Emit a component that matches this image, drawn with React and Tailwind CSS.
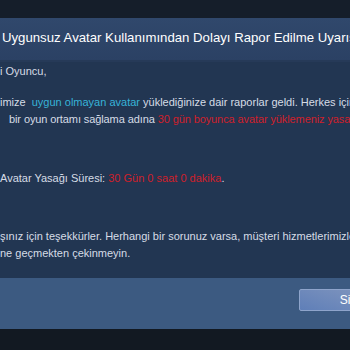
export default function App() {
  const font = { fontFamily: '"Liberation Sans", Arial, sans-serif' };
  return (
    <div
      className="w-[350px] h-[350px] overflow-hidden flex flex-col bg-[#121922]"
      style={font}
    >
      {/* üst karanlık şerit */}
      <div className="h-[18px] shrink-0 bg-[#151e2a]" />

      {/* başlık */}
      <div className="h-[44px] shrink-0 flex items-center pl-[2px] pb-[2px] bg-gradient-to-b from-[#30486c] to-[#2b4164] border-b-2 border-[#263a58] whitespace-nowrap overflow-hidden">
        <span className="text-[13.2px] text-white">
          Uygunsuz Avatar Kullanımından Dolayı Rapor Edilme Uyarısı
        </span>
      </div>

      {/* içerik */}
      <div className="h-[216px] shrink-0 bg-[#223652] text-[11px] text-[#d6dce6] whitespace-nowrap overflow-hidden flex flex-col pt-[1px]">
        <div className="h-[17px] leading-[17px]">i Oyuncu,</div>
        <div className="h-[14px] shrink-0" />
        <div className="h-[17px] leading-[17px]">
          imize <span className="text-[#37b3d8] ml-[3px]">uygun olmayan avatar</span> yüklediğinize dair raporlar geldi. Herkes için
        </div>
        <div className="h-[17px] leading-[17px] pl-[9px] tracking-[-0.1px]">
          bir oyun ortamı sağlama adına{' '}
          <span className="text-[#cf1f2b]">30 gün boyunca avatar yüklemeniz yasaklanmıştır.</span>
        </div>
        <div className="h-[42px] shrink-0" />
        <div className="h-[17px] leading-[17px]">
          Avatar Yasağı Süresi: <span className="text-[#cf1f2b]">30 Gün 0 saat 0 dakika</span>.
        </div>
        <div className="h-[41px] shrink-0" />
        <div className="h-[17px] leading-[17px]">
          şınız için teşekkürler. Herhangi bir sorunuz varsa, müşteri hizmetlerimizle
        </div>
        <div className="h-[17px] leading-[17px]">ne geçmekten çekinmeyin.</div>
      </div>

      {/* alt bölüm */}
      <div className="h-[51px] shrink-0 bg-[#3c5a81] flex items-start justify-end pt-[11px] overflow-hidden">
        <button className="w-[60px] h-[22px] shrink-0 -mr-[9px] flex items-center justify-end pr-[5px] rounded-[2px] border border-[#8ea4cb] bg-gradient-to-tr from-[#5f7fb8] to-[#7d93bd] text-[12px] text-white">
          Sil
        </button>
      </div>

      <div className="flex-1 bg-[#121922]" />
    </div>
  );
}
